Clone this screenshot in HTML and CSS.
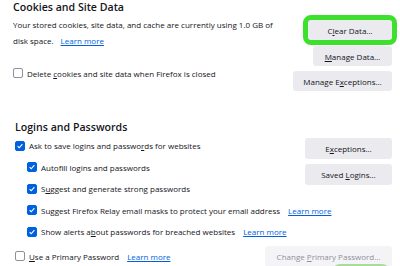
FILE: index.html
```html
<!DOCTYPE html>
<html lang="en">
	<head>
		<meta charset="UTF-8" />
		<meta name="viewport" content="width=device-width, initial-scale=1.0" />
		<title>Privacy Settings</title>
		<link rel="stylesheet" href="styles.css">
	</head>
	<body>
		<section class="pref-section cookies">
			<h2 class="section-title">Cookies and Site Data</h2>
			<div class="section-body">
				<div class="section-left">
					<p class="description">
						Your stored cookies, site data, and cache are currently using 1.0 GB of
						disk space.<a href="#" class="learn-more">Learn more</a>
					</p>
					<label class="check-row delete-row">
						<span class="checkbox"></span>
						<span>Delete <u>c</u>ookies and site data when Firefox is closed</span>
					</label>
				</div>
				<div class="section-right">
					<button class="pref-button clear-data">C<u>l</u>ear Data…</button>
					<button class="pref-button manage-data"><u>M</u>anage Data…</button>
					<button class="pref-button manage-exceptions">Manage E<u>x</u>ceptions…</button>
				</div>
			</div>
		</section>

		<section class="pref-section logins">
			<h2 class="section-title">Logins and Passwords</h2>
			<div class="section-body">
				<div class="section-left">
					<label class="check-row">
						<span class="checkbox checked"></span>
						<span>Ask to save logins and passwo<u>r</u>ds for websites</span>
					</label>
					<label class="check-row nested">
						<span class="checkbox checked"></span>
						<span>Autof<u>i</u>ll logins and passwords</span>
					</label>
					<label class="check-row nested">
						<span class="checkbox checked"></span>
						<span>S<u>u</u>ggest and generate strong passwords</span>
					</label>
					<label class="check-row nested">
						<span class="checkbox checked"></span>
						<span>Suggest Firefox Relay email masks to protect your email address</span>
						<a href="#" class="learn-more">Learn more</a>
					</label>
					<label class="check-row nested">
						<span class="checkbox checked"></span>
						<span>Show alerts a<u>b</u>out passwords for breached websites</span>
						<a href="#" class="learn-more">Learn more</a>
					</label>
				</div>
				<div class="section-right">
					<button class="pref-button exceptions">E<u>x</u>ceptions…</button>
					<button class="pref-button saved-logins">Saved <u>L</u>ogins…</button>
				</div>
			</div>
			<div class="primary-row">
				<label class="check-row">
					<span class="checkbox"></span>
					<span><u>U</u>se a Primary Password</span>
					<a href="#" class="learn-more">Learn more</a>
				</label>
				<button class="pref-button change-primary" disabled>Change <u>P</u>rimary Password…</button>
			</div>
			<div class="next-row">
				<div class="next-button" aria-hidden="true"></div>
			</div>
		</section>
	</body>
</html>
```

FILE: styles.css
```css
* {
	margin: 0;
	padding: 0;
	box-sizing: border-box;
	font-family: "Open Sans", "Noto Sans", sans-serif;
}
body {
	width: 400px;
	height: 266px;
	overflow: hidden;
	background-color: #ffffff;
	color: #15141a;
	font-size: 8px;
}
.pref-section {
	padding-right: 8px;
}
.cookies {
	padding-left: 13px;
}
.logins {
	padding-left: 15px;
	margin-top: 29px;
}
.section-title {
	font-size: 10.6px;
	font-weight: 600;
	line-height: 14px;
}
.section-body {
	display: flex;
	justify-content: space-between;
}
.cookies .section-body {
	margin-top: 1px;
}
.logins .section-body {
	margin-top: 1px;
}
.section-left {
	display: flex;
	flex-direction: column;
	flex: 1;
	min-width: 0;
}
.cookies .section-left {
	padding-top: 2px;
}
.description {
	line-height: 16px;
	width: 270px;
}
.learn-more {
	color: #0061e0;
	text-decoration: underline;
	margin-left: 4px;
}
.description .learn-more {
	margin-left: 7px;
}
.check-row {
	display: flex;
	align-items: center;
	gap: 4px;
	height: 21.5px;
	white-space: nowrap;
}
.delete-row {
	height: 16px;
	margin-top: 16px;
}
.check-row.nested {
	padding-left: 12px;
}
.checkbox {
	width: 10px;
	height: 10px;
	border: 1px solid #8f8f9d;
	border-radius: 2px;
	background-color: #ffffff;
	flex-shrink: 0;
}
.checkbox.checked {
	border-color: #0061e0;
	background-color: #0061e0;
	background-image: url("data:image/svg+xml,%3Csvg xmlns='http://www.w3.org/2000/svg' viewBox='0 0 10 10'%3E%3Cpath d='M2 5.2l2 2 4-4.4' fill='none' stroke='white' stroke-width='1.4'/%3E%3C/svg%3E");
	background-size: 100% 100%;
}
.section-right {
	display: flex;
	flex-direction: column;
	align-items: flex-end;
	gap: 5px;
	flex-shrink: 0;
}
.cookies .section-right {
	padding-top: 5px;
}
.logins .section-right {
	padding-top: 3px;
}
.pref-button {
	height: 20px;
	border: none;
	border-radius: 3px;
	background-color: #ebebef;
	color: #15141a;
	font-size: 8px;
	padding: 0 6px;
	white-space: nowrap;
}
.clear-data {
	width: 84px;
	margin-bottom: 1px;
	outline: 5px solid #3de02c;
}
.manage-data {
	width: 79px;
}
.manage-exceptions {
	width: 99px;
}
.exceptions,
.saved-logins {
	width: 87px;
	height: 21px;
}
.primary-row {
	display: flex;
	justify-content: space-between;
	align-items: center;
	margin-top: 3px;
}
.change-primary {
	width: 127px;
	height: 21px;
}
.pref-button:disabled {
	background-color: #f4f4f6;
	color: #8f8f9d;
}
.next-row {
	display: flex;
	justify-content: flex-end;
	margin-top: 1.5px;
	padding-right: 7px;
}
.next-button {
	width: 48px;
	height: 20px;
	border-radius: 3px;
	background-color: #ebebef;
	outline: 5px solid #a9dc9c;
}
```
